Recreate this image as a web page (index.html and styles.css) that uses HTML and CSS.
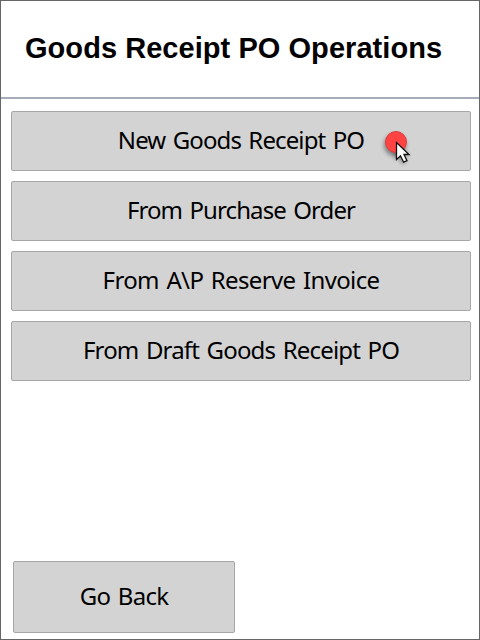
FILE: index.html
```html
<!DOCTYPE html>
<html lang="en">
<head>
<meta charset="utf-8">
<title>Goods Receipt PO Operations</title>
<link rel="stylesheet" href="styles.css">
</head>
<body>
<main class="screen">
  <header class="header"><h1 class="title">Goods Receipt PO Operations</h1></header>
  <nav class="menu">
    <button class="button new"><span>New Goods Receipt PO</span>
      <svg class="pointer" width="36" height="44" viewBox="0 0 36 44" aria-hidden="true">
        <circle class="shadow" cx="15" cy="18" r="11"/>
        <path class="shadow" d="M15 16v17l4-3 3 7 4-2-3-6h6z"/>
        <circle cx="16" cy="15" r="10.5" fill="#ff4343" stroke="#d93c3c"/>
        <path d="M16.5 15.5v17l4-3.7 3.1 6.4 3.4-1.6-3-6.1h5z" fill="#fff" stroke="#111" stroke-width="1.3"/>
      </svg>
    </button>
    <button class="button order"><span>From Purchase Order</span></button>
    <button class="button invoice"><span>From A\P Reserve Invoice</span></button>
    <button class="button draft"><span>From Draft Goods Receipt PO</span></button>
  </nav>
  <footer class="footer"><button class="button back"><span>Go Back</span></button></footer>
</main>
</body>
</html>
```
FILE: styles.css
```css
* { box-sizing: border-box; }
body { margin: 0; background: #fff; }
.screen {
  width: 480px;
  height: 640px;
  display: flex;
  flex-direction: column;
  border: 1px solid #666;
  background: #fff;
}
.header {
  height: 98px;
  padding: 0 24px 2px;
  display: flex;
  align-items: center;
  border-bottom: 2px solid #a5adb8;
}
.title {
  margin: 0;
  font: bold 29px/34px "Liberation Sans", Arial, sans-serif;
  letter-spacing: 0.05px;
  color: #000;
  white-space: nowrap;
}
.menu {
  padding: 12px 8px 0 10px;
  display: flex;
  flex-direction: column;
  gap: 10px;
}
.button {
  position: relative;
  width: 100%;
  height: 60px;
  margin: 0;
  padding: 0 0 2px;
  display: flex;
  align-items: center;
  justify-content: center;
  border: 1px solid #a6a6a6;
  border-radius: 2px;
  background: #d3d3d3;
  color: #000;
  font: 24px/30px "Noto Sans", Tahoma, sans-serif;
  word-spacing: 2px;
  white-space: nowrap;
}
.new { letter-spacing: -0.88px; }
.order { letter-spacing: -0.9px; }
.invoice { letter-spacing: -0.65px; }
.draft { letter-spacing: -0.82px; }
.footer { margin-top: auto; padding: 0 0 6px 12px; }
.back { width: 222px; height: 72px; letter-spacing: -0.7px; }
.pointer { position: absolute; left: 368px; top: 15px; overflow: visible; }
.shadow { fill: #000; opacity: .4; filter: blur(2px); }
```
